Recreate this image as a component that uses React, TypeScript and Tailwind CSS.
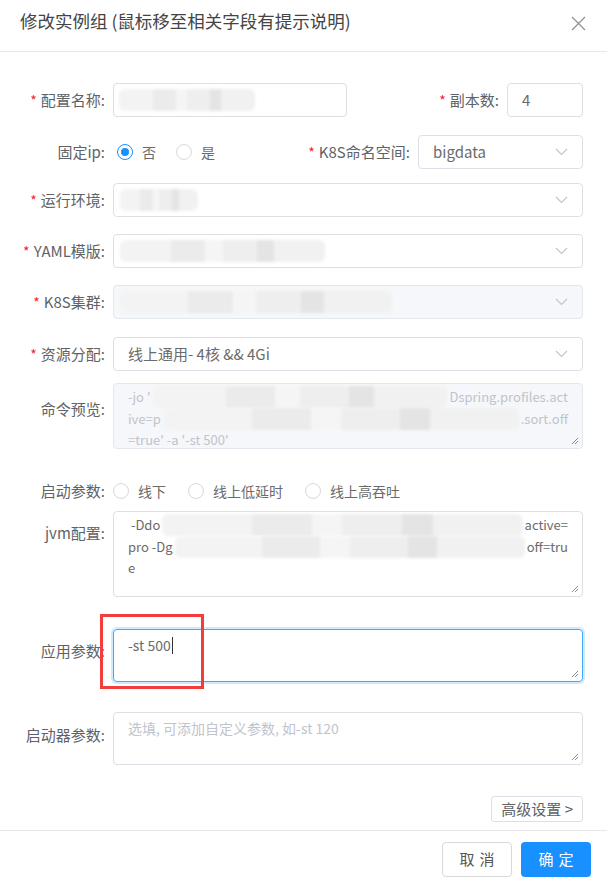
import React from "react";

const FONT = { fontFamily: '"Noto Sans CJK SC", "Liberation Sans", sans-serif' };

function Redact({ className = "" }: { className?: string }) {
  // mosaic block covering hidden values
  return (
    <span className={`flex h-[22px] overflow-hidden rounded-[6px] blur-[1.5px] ${className}`}>
      <span className="flex-[3] bg-[#f3f3f3]" />
      <span className="flex-[2] bg-[#ebebeb]" />
      <span className="flex-[1] bg-[#f5f5f5]" />
      <span className="flex-[2] bg-[#eeeeee]" />
      <span className="flex-[1] bg-[#e4e4e4]" />
      <span className="flex-[3] bg-[#f1f1f1]" />
    </span>
  );
}

function Label({ text, required, className = "" }: { text: string; required?: boolean; className?: string }) {
  return (
    <div className={`flex shrink-0 items-center justify-end whitespace-nowrap pr-[8px] text-[15px] text-[#606266] ${className}`}>
      {required && <span className="mr-[4px] text-[14px] text-[#f5222d]">*</span>}
      {text}:
    </div>
  );
}

function Chevron() {
  return (
    <svg width="13" height="8" viewBox="0 0 13 8" className="shrink-0">
      <path d="M1 1l5.5 5.5L12 1" fill="none" stroke="#c0c4cc" strokeWidth="1.1" />
    </svg>
  );
}

function Grip() {
  return (
    <svg width="8" height="8" viewBox="0 0 8 8" className="absolute bottom-[3px] right-[3px]">
      <path d="M7 1L1 7M7 4L4 7" stroke="#888" strokeWidth="1" />
    </svg>
  );
}

function Radio({ label, checked }: { label: string; checked?: boolean }) {
  return (
    <div className="flex items-center">
      <span
        className={`flex h-[16px] w-[16px] items-center justify-center rounded-full border ${
          checked ? "border-[#1890ff]" : "border-[#d9d9d9]"
        }`}
      >
        {checked && <span className="h-[8px] w-[8px] rounded-full bg-[#1890ff]" />}
      </span>
      <span className="ml-[9px] text-[14px] text-[#6b6b6b]">{label}</span>
    </div>
  );
}

function Select({ children, disabled, className = "" }: { children?: React.ReactNode; disabled?: boolean; className?: string }) {
  return (
    <div
      className={`flex h-[34px] items-center justify-between rounded-[4px] border pl-[14px] pr-[14px] text-[15px] text-[#6b6b6b] ${
        disabled ? "border-[#e4e7ed] bg-[#f5f7fa]" : "border-[#dcdfe6] bg-white"
      } ${className}`}
    >
      <div className="flex min-w-0 flex-1 items-center">{children}</div>
      <Chevron />
    </div>
  );
}

export default function App() {
  return (
    <div style={FONT} className="flex h-[885px] w-[607px] flex-col overflow-hidden bg-white">
      <div className="flex h-[52px] shrink-0 items-start justify-between border-b border-[#e8e8e8] pl-[20px] pr-[21px] pt-[8px]">
        <span className="text-[17.5px] text-[#444]">修改实例组 (鼠标移至相关字段有提示说明)</span>
        <svg width="15" height="15" viewBox="0 0 15 15" className="mt-[8px]">
          <path d="M1 1l13 13M14 1L1 14" stroke="#909399" strokeWidth="1.3" />
        </svg>
      </div>

      <div className="flex flex-col pr-[24px]">
        <div className="mt-[31px] flex h-[34px]">
          <Label text="配置名称" required className="w-[113px]" />
          <div className="flex h-[34px] w-[234px] items-center rounded-[4px] border border-[#dcdfe6] pl-[5px]">
            <Redact className="w-[136px]" />
          </div>
          <Label text="副本数" required className="flex-1" />
          <div className="flex h-[34px] w-[76px] items-center rounded-[4px] border border-[#dcdfe6] px-[14px] text-[15px] text-[#6b6b6b]">
            4
          </div>
        </div>

        <div className="mt-[18px] flex h-[34px]">
          <Label text="固定ip" className="w-[113px]" />
          <div className="ml-[4px] flex items-center gap-[20px]">
            <Radio label="否" checked />
            <Radio label="是" />
          </div>
          <Label text="K8S命名空间" required className="flex-1" />
          <Select className="w-[165px]">bigdata</Select>
        </div>

        <div className="mt-[14px] flex h-[34px]">
          <Label text="运行环境" required className="w-[113px]" />
          <Select className="flex-1 !pl-[6px]">
            <Redact className="w-[78px]" />
          </Select>
        </div>

        <div className="mt-[17px] flex h-[34px]">
          <Label text="YAML模版" required className="w-[113px]" />
          <Select className="flex-1 !pl-[6px]">
            <Redact className="w-[205px]" />
          </Select>
        </div>

        <div className="mt-[17px] flex h-[34px]">
          <Label text="K8S集群" required className="w-[113px]" />
          <Select disabled className="flex-1 !pl-[6px]">
            <Redact className="w-[272px]" />
          </Select>
        </div>

        <div className="mt-[18px] flex h-[34px]">
          <Label text="资源分配" required className="w-[113px]" />
          <Select className="flex-1">线上通用- 4核 &amp;&amp; 4Gi</Select>
        </div>

        <div className="mt-[12px] flex">
          <Label text="命令预览" className="h-[52px] w-[113px]" />
          <div className="relative h-[66px] flex-1 rounded-[4px] border border-[#e4e7ed] bg-[#f5f7fa] px-[14px] pt-[2px] text-[13px] leading-[20px] text-[#c0c4cc]">
            <div className="flex items-center">
              <span>-jo '</span>
              <Redact className="mx-[2px] flex-1" />
              <span>Dspring.profiles.act</span>
            </div>
            <div className="flex items-center">
              <span>ive=p</span>
              <Redact className="mx-[2px] flex-1" />
              <span>.sort.off</span>
            </div>
            <div>=true' -a '-st 500'</div>
            <Grip />
          </div>
        </div>

        <div className="mt-[32px] flex h-[20px]">
          <Label text="启动参数" className="w-[113px]" />
          <div className="flex items-center gap-[22px]">
            <Radio label="线下" />
            <Radio label="线上低延时" />
            <Radio label="线上高吞吐" />
          </div>
        </div>

        <div className="mt-[10px] flex">
          <Label text="jvm配置" className="h-[44px] w-[113px]" />
          <div className="relative h-[86px] flex-1 rounded-[4px] border border-[#dcdfe6] px-[14px] pt-[2px] text-[13px] leading-[20px] text-[#6b6b6b]">
            <div className="flex items-center">
              <span>&nbsp;-Ddo</span>
              <Redact className="mx-[2px] flex-1" />
              <span>active=</span>
            </div>
            <div className="flex items-center">
              <span>pro -Dg</span>
              <Redact className="mx-[2px] flex-1" />
              <span>off=tru</span>
            </div>
            <div>e</div>
            <Grip />
          </div>
        </div>

        <div className="relative mt-[32px] flex">
          <Label text="应用参数" className="h-[44px] w-[113px]" />
          <div className="relative h-[53px] flex-1 rounded-[4px] border border-[#40a9ff] px-[14px] pt-[5px] text-[14px] leading-[20px] text-[#6b6b6b] shadow-[0_0_0_2px_rgba(24,144,255,0.2)]">
            <div className="flex items-center">
              -st 500
              <span className="ml-[1px] h-[17px] w-[1px] bg-[#333]" />
            </div>
            <Grip />
          </div>
          <div className="absolute left-[100px] top-[-15px] h-[75px] w-[104px] border-[3px] border-[#f33d3d]" />
        </div>

        <div className="mt-[30px] flex">
          <Label text="启动器参数" className="h-[46px] w-[113px]" />
          <div className="relative h-[53px] flex-1 rounded-[4px] border border-[#dcdfe6] px-[14px] pt-[5px] text-[14px] leading-[20px] text-[#c0c4cc]">
            选填, 可添加自定义参数, 如-st 120
            <Grip />
          </div>
        </div>

        <div className="mt-[31px] flex justify-end">
          <div className="flex h-[26px] items-center rounded-[3px] border border-[#dcdfe6] px-[9px] text-[15px] text-[#606266]">
            高级设置 &gt;
          </div>
        </div>
      </div>

      <div className="mt-[8px] flex justify-end gap-[9px] border-t border-[#e8e8e8] pr-[16px] pt-[11px]">
        <div className="flex h-[35px] w-[70px] items-center justify-center rounded-[4px] border border-[#d9d9d9] text-[15px] tracking-[5px] text-[#555]">
          <span className="ml-[5px]">取消</span>
        </div>
        <div className="flex h-[35px] w-[70px] items-center justify-center rounded-[4px] bg-[#1890ff] text-[15px] tracking-[5px] text-white">
          <span className="ml-[5px]">确定</span>
        </div>
      </div>
    </div>
  );
}
